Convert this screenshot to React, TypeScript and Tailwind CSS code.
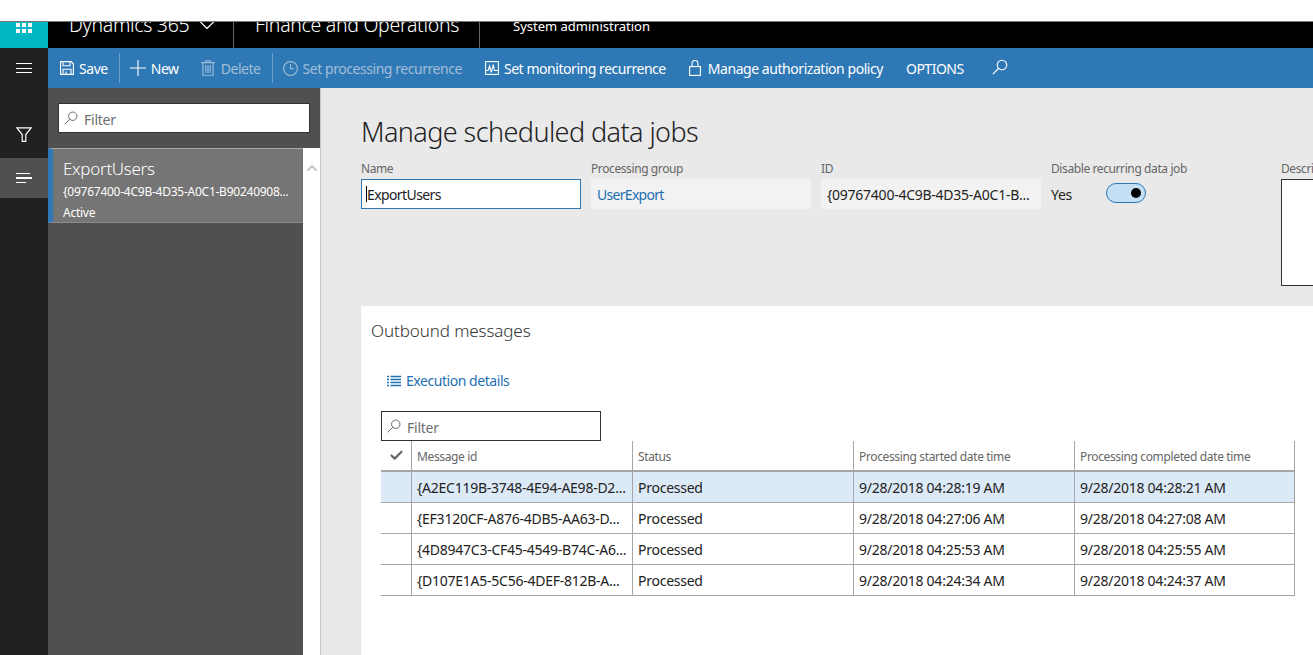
import React from 'react';
import { Check, ChevronDown, ChevronUp } from 'lucide-react';

const rows = [
  ['{A2EC119B-3748-4E94-AE98-D2...', '9/28/2018 04:28:19 AM', '9/28/2018 04:28:21 AM'],
  ['{EF3120CF-A876-4DB5-AA63-D...', '9/28/2018 04:27:06 AM', '9/28/2018 04:27:08 AM'],
  ['{4D8947C3-CF45-4549-B74C-A6...', '9/28/2018 04:25:53 AM', '9/28/2018 04:25:55 AM'],
  ['{D107E1A5-5C56-4DEF-812B-A...', '9/28/2018 04:24:34 AM', '9/28/2018 04:24:37 AM'],
];

function SearchIcon({ size, className }: { size: number; className?: string }) {
  return (
    <svg width={size} height={size} viewBox="0 0 16 16" fill="none" stroke="currentColor" strokeWidth="1.1" className={className}>
      <circle cx="10" cy="6" r="4.8" />
      <path d="M6.5 9.5L0.8 15.2" />
    </svg>
  );
}

function ToolButton({ icon, label, dim, className }: { icon: React.ReactNode; label: string; dim?: boolean; className?: string }) {
  return (
    <div className={`flex items-center text-[14px] tracking-[-0.45px] whitespace-nowrap ${dim ? 'text-[#a3bfd8]' : 'text-white'} ${className ?? ''}`}>
      {icon}
      <span>{label}</span>
    </div>
  );
}

function FilterBox({ className }: { className: string }) {
  return (
    <div className={`flex items-center border border-[#333] bg-white h-[30px] pl-[5px] ${className}`}>
      <SearchIcon size={14} className="text-[#666]" />
      <span className="ml-[6px] mt-[3px] text-[14px] tracking-[-0.25px] text-[#6e6e6e]">Filter</span>
    </div>
  );
}

function Label({ children }: { children: React.ReactNode }) {
  return <div className="h-[19px] text-[12px] leading-[17px] tracking-[-0.4px] text-[#666] whitespace-nowrap">{children}</div>;
}

export default function App() {
  return (
    <div className="h-[655px] w-[1313px] overflow-hidden bg-white font-['Noto_Sans','Open_Sans',sans-serif] flex flex-col">
      <div className="h-[21px] shrink-0 bg-white" />
      <div className="h-[1px] shrink-0 bg-[#777]" />
      {/* top nav, text is cut off by the window edge */}
      <div className="h-[26px] shrink-0 bg-black flex overflow-hidden text-white">
        <div className="w-[48px] bg-[#00b7c3] flex justify-center pt-[1px]">
          <div className="grid grid-cols-3 gap-[2px] w-[16px] h-[10px]">
            {[0, 1, 2, 3, 4, 5].map((i) => (
              <div key={i} className="bg-white w-[4px] h-[4px]" />
            ))}
          </div>
        </div>
        <div className="w-[186px] border-r border-[#666] pl-[21px] flex items-start gap-[4px] -mt-[11px] h-[37px]">
          <span className="text-[19.5px] leading-[26px] mt-[1px] tracking-[-0.3px] font-light whitespace-nowrap">Dynamics 365</span>
          <ChevronDown size={28} strokeWidth={1} />
        </div>
        <div className="w-[246px] border-r border-[#666] pl-[21px] -mt-[11px] h-[37px]">
          <span className="text-[19.5px] leading-[26px] block mt-[1px] tracking-[-0.3px] font-light whitespace-nowrap">Finance and Operations</span>
        </div>
        <div className="pl-[33px] text-[13px] leading-[18px] -mt-[5px] whitespace-nowrap">System administration</div>
      </div>

      <div className="flex flex-1 min-h-0">
        {/* left rail */}
        <div className="w-[48px] shrink-0 bg-[#212121] text-white flex flex-col">
          <div className="h-[40px] flex flex-col items-center justify-center gap-[3.5px]">
            <div className="h-[1px] w-[16px] bg-white" />
            <div className="h-[1px] w-[16px] bg-white" />
            <div className="h-[1px] w-[16px] bg-white" />
          </div>
          <div className="h-[70px] flex items-end justify-center pb-[16px]">
            <svg width="16" height="15" viewBox="0 0 16 15" fill="none" stroke="currentColor" strokeWidth="1.2">
              <path d="M0.8 0.8h14.4L9.8 7.5v6.8H6.2V7.5z" />
            </svg>
          </div>
          <div className="h-[40px] bg-[#505050] flex flex-col justify-center items-start gap-[3px] pl-[16px]">
            <div className="h-[1px] w-[14px] bg-white" />
            <div className="h-[1.5px] w-[16px] bg-white" />
            <div className="h-[1px] w-[10px] bg-white" />
          </div>
        </div>

        <div className="flex-1 min-w-0 flex flex-col">
          {/* action bar */}
          <div className="h-[40px] shrink-0 bg-[#2e78b5] flex items-center">
            <ToolButton
              className="ml-[12px]"
              icon={
                <svg width="14" height="14" viewBox="0 0 14 14" fill="none" stroke="currentColor" strokeWidth="1.1" className="mr-[5px]">
                  <path d="M0.6 0.6h10.6l2.2 2.2v10.6H0.6z" />
                  <path d="M3 0.6v4.2h7V0.6M3 13.4V8.2h8v5.2M6 13.4v-3" />
                </svg>
              }
              label="Save"
            />
            <div className="h-[30px] w-[1px] bg-[#6d9fc9] ml-[11px]" />
            <ToolButton
              className="ml-[10px]"
              icon={
                <svg width="16" height="16" viewBox="0 0 16 16" fill="none" stroke="currentColor" strokeWidth="1.1" className="mr-[5px]">
                  <path d="M8 0v16M0 8h16" />
                </svg>
              }
              label="New"
            />
            <ToolButton
              className="ml-[22px]"
              dim
              icon={
                <svg width="14" height="16" viewBox="0 0 14 16" fill="none" stroke="currentColor" strokeWidth="1.1" className="mr-[6px]">
                  <path d="M0 2.6h14M4.8 2.6V0.7h4.4v1.9M1.9 2.6v12.7h10.2V2.6M4.8 5.2v7.8M7 5.2v7.8M9.2 5.2v7.8" />
                </svg>
              }
              label="Delete"
            />
            <div className="h-[30px] w-[1px] bg-[#6d9fc9] ml-[11px]" />
            <ToolButton
              className="ml-[10px]"
              dim
              icon={
                <svg width="15" height="15" viewBox="0 0 15 15" fill="none" stroke="currentColor" strokeWidth="1.1" className="mr-[5px]">
                  <circle cx="7.5" cy="7.5" r="6.9" />
                  <path d="M7.5 3v4.8h3.5" />
                </svg>
              }
              label="Set processing recurrence"
            />
            <ToolButton
              className="ml-[23px]"
              icon={
                <svg width="14" height="14" viewBox="0 0 14 14" fill="none" stroke="currentColor" strokeWidth="1.1" className="mr-[5px]">
                  <rect x="0.6" y="0.6" width="12.8" height="12.8" />
                  <path d="M0.6 9.5h2.6l1.4-4.5 1.8 6.5 1.8-8 1.2 6h3.4" />
                </svg>
              }
              label="Set monitoring recurrence"
            />
            <ToolButton
              className="ml-[23px]"
              icon={
                <svg width="12" height="16" viewBox="0 0 12 16" fill="none" stroke="currentColor" strokeWidth="1.1" className="mr-[7px]">
                  <rect x="0.6" y="6.6" width="10.8" height="8.8" />
                  <path d="M3 6.6V3.4a3 3 0 0 1 6 0v3.2" />
                </svg>
              }
              label="Manage authorization policy"
            />
            <div className="ml-[23px] text-[14px] tracking-[-0.5px] text-white mt-[1px]">OPTIONS</div>
            <SearchIcon size={16} className="ml-[28px] text-white -mt-[3px]" />
          </div>

          <div className="flex-1 min-h-0 flex">
            {/* list pane */}
            <div className="w-[273px] shrink-0 flex flex-col bg-[#505050] border-r border-[#c8c8c8]">
              <div className="h-[60px] shrink-0 pl-[10px] pt-[15px]">
                <FilterBox className="w-[252px]" />
              </div>
              <div className="flex-1 flex min-h-0">
                <div className="w-[255px] shrink-0">
                  <div className="h-[75px] bg-[#757575] border-l-[5px] border-l-[#2e78b5] border-t border-t-[#a8a8a8] border-b border-b-[#8c8c8c] pl-[10px] text-white">
                    <div className="text-[17px] leading-[22px] tracking-[-0.3px] mt-[9px] font-light">ExportUsers</div>
                    <div className="text-[12px] leading-[16px] tracking-[-0.25px] mt-[4px] whitespace-nowrap">{'{09767400-4C9B-4D35-A0C1-B90240908...'}</div>
                    <div className="text-[12px] leading-[16px] tracking-[-0.25px] mt-[5px]">Active</div>
                  </div>
                </div>
                <div className="flex-1 bg-white flex justify-center pt-[12px]">
                  <ChevronUp size={16} strokeWidth={3} className="text-[#c8c8c8]" />
                </div>
              </div>
            </div>

            {/* content */}
            <div className="flex-1 min-w-0 bg-[#e9e9e9] pl-[40px] overflow-hidden flex flex-col">
              <div className="h-[72px] shrink-0 flex items-end pb-[10px] text-[27px] leading-[36px] tracking-[-0.58px] font-light text-[#222] whitespace-nowrap">
                Manage scheduled data jobs
              </div>
              <div className="h-[146px] shrink-0 flex gap-[10px]">
                <div className="w-[220px] shrink-0">
                  <Label>Name</Label>
                  <div className="h-[30px] bg-white border border-[#2e78b5] flex items-center pl-[5px] text-[14px] tracking-[-0.6px] text-[#222]">
                    <div className="relative">
                      <span className="absolute -left-[1px] top-[2px] h-[16px] w-[1px] bg-black" />
                      ExportUsers
                    </div>
                  </div>
                </div>
                <div className="w-[220px] shrink-0">
                  <Label>Processing group</Label>
                  <div className="h-[30px] bg-[#f2f2f2] flex items-center pl-[6px] text-[14px] tracking-[-0.7px] text-[#1f6fb0]">UserExport</div>
                </div>
                <div className="w-[220px] shrink-0">
                  <Label>ID</Label>
                  <div className="h-[30px] bg-[#f2f2f2] flex items-center pl-[6px] text-[14px] tracking-[-0.25px] text-[#222] whitespace-nowrap">{'{09767400-4C9B-4D35-A0C1-B...'}</div>
                </div>
                <div className="w-[220px] shrink-0">
                  <Label>Disable recurring data job</Label>
                  <div className="h-[30px] flex items-center text-[14px] tracking-[-0.25px] text-[#222]">
                    <span className="w-[55px]">Yes</span>
                    <div className="w-[40px] h-[20px] -mt-[2px] rounded-full border border-[#2e78b5] bg-[#c5dff5] flex items-center justify-end pr-[4px]">
                      <div className="w-[10px] h-[10px] rounded-full bg-black" />
                    </div>
                  </div>
                </div>
                <div className="w-[220px] shrink-0">
                  <Label>Description</Label>
                  <div className="h-[107px] bg-white border border-[#333]" />
                </div>
              </div>

              {/* outbound messages */}
              <div className="flex-1 bg-white pl-[10px]">
                <div className="h-[50px] flex items-end pb-[13px] text-[17px] leading-[24px] tracking-[-0.1px] text-[#333] font-light">Outbound messages</div>
                <div className="h-[55px] pl-[16px] pt-[15px] flex items-start gap-[5px] text-[14px] leading-[20px] tracking-[-0.45px] text-[#1f6fb0]">
                  <svg width="14" height="12" viewBox="0 0 14 12" className="mt-[4px]" fill="none" stroke="currentColor" strokeWidth="1.4">
                    <path d="M0 1.5h2M3.5 1.5H14M0 4.5h2M3.5 4.5H14M0 7.5h2M3.5 7.5H14M0 10.5h2M3.5 10.5H14" />
                  </svg>
                  Execution details
                </div>
                <div className="pl-[10px]">
                  <FilterBox className="w-[220px]" />
                  <div className="grid grid-cols-[30px_221px_221px_221px_221px] w-[915px] text-[14px] tracking-[-0.25px] text-[#222]">
                    <div className="h-[31px] border-b-2 border-b-[#a6a6a6] flex items-center justify-center">
                      <Check size={15} strokeWidth={3.5} className="text-[#666]" />
                    </div>
                    {['Message id', 'Status', 'Processing started date time', 'Processing completed date time'].map((h, i) => (
                      <div key={h} className={`h-[31px] border-l border-b-2 border-[#a6a6a6] pl-[5px] pt-[2px] flex items-center text-[12px] tracking-[-0.36px] text-[#666] ${i === 3 ? 'border-r' : ''}`}>
                        {h}
                      </div>
                    ))}
                    {rows.map((r, i) => (
                      <React.Fragment key={r[0]}>
                        <div className={`h-[31px] border-b border-[#a6a6a6] ${i === 0 ? 'bg-[#dce9f7]' : ''}`} />
                        {[r[0], 'Processed', r[1], r[2]].map((c, j) => (
                          <div key={j} className={`h-[31px] border-l border-b border-[#a6a6a6] pl-[5px] flex items-center whitespace-nowrap overflow-hidden ${i === 0 ? 'bg-[#dce9f7]' : ''} ${j === 3 ? 'border-r' : ''}`}>
                            {c}
                          </div>
                        ))}
                      </React.Fragment>
                    ))}
                  </div>
                </div>
              </div>
            </div>
          </div>
        </div>
      </div>
    </div>
  );
}
